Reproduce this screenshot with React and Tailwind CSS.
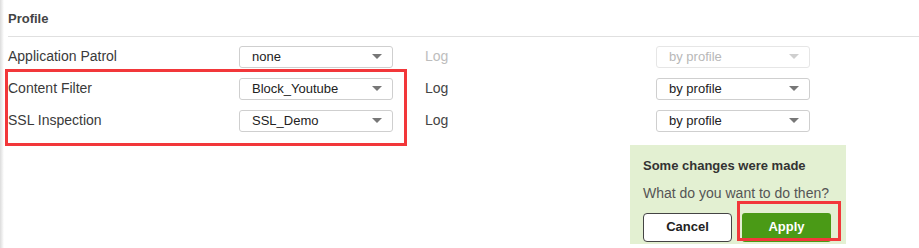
export default function App() {
  const font = { fontFamily: '"Liberation Sans", Arial, sans-serif' };
  const Select = ({ value, disabled }) => (
    <div
      className={`flex h-[22px] w-[154px] items-center justify-between rounded-[3px] border pl-[12px] pr-[10px] text-[13px] ${
        disabled ? "border-[#e6e6e6] text-[#b8b8b8]" : "border-[#cfcfcf] text-[#222]"
      }`}
    >
      <span>{value}</span>
      <span
        className={`h-0 w-0 border-x-[5px] border-t-[5px] border-x-transparent ${
          disabled ? "border-t-[#cfcfcf]" : "border-t-[#777]"
        }`}
      />
    </div>
  );
  const Row = ({ label, value, log, sel, disabled }) => (
    <div className="flex h-[32px] items-center">
      <div className="w-[231px] text-[14px] text-[#3a3a3a]">{label}</div>
      <Select value={value} />
      <div className={`ml-[32px] w-[231px] text-[14px] ${disabled ? "text-[#bdbdbd]" : "text-[#444]"}`}>{log}</div>
      <Select value={sel} disabled={disabled} />
    </div>
  );
  return (
    <div className="relative h-[248px] w-[919px] overflow-hidden bg-white" style={font}>
      <div className="absolute left-0 top-0 h-full w-[4px] bg-gradient-to-r from-[#dcdcdc] to-white" />
      <div className="pl-[8px]">
        <div className="pt-[9px] text-[13px] font-bold text-[#444]">Profile</div>
        <div className="mt-[7px] h-px bg-[#e0e0e0]" />
        <div className="pt-[4px]">
          <Row label="Application Patrol" value="none" log="Log" sel="by profile" disabled />
          <Row label="Content Filter" value="Block_Youtube" log="Log" sel="by profile" />
          <Row label="SSL Inspection" value="SSL_Demo" log="Log" sel="by profile" />
        </div>
      </div>
      <div className="pointer-events-none absolute left-[5px] top-[69px] h-[77px] w-[402px] border-[3px] border-[#f2373a]" />
      <div className="absolute left-[630px] top-[145px] h-[99px] w-[216px] bg-[#e3f0d2] px-[13px] pt-[11px]">
        <div className="text-[13px] font-bold text-[#333]">Some changes were made</div>
        <div className="mt-[7px] text-[14px] text-[#555]">What do you want to do then?</div>
        <div className="mt-[9px] flex items-center gap-[10px]">
          <div className="flex h-[29px] w-[89px] items-center justify-center rounded-[4px] border border-[#444] bg-white text-[13px] font-bold text-[#222]">
            Cancel
          </div>
          <div className="flex h-[29px] w-[89px] items-center justify-center rounded-[3px] bg-[#4a9a16] text-[13px] font-bold text-white">
            Apply
          </div>
        </div>
      </div>
      <div className="pointer-events-none absolute left-[737px] top-[201px] h-[40px] w-[104px] border-[3px] border-[#f2373a]" />
    </div>
  );
}
